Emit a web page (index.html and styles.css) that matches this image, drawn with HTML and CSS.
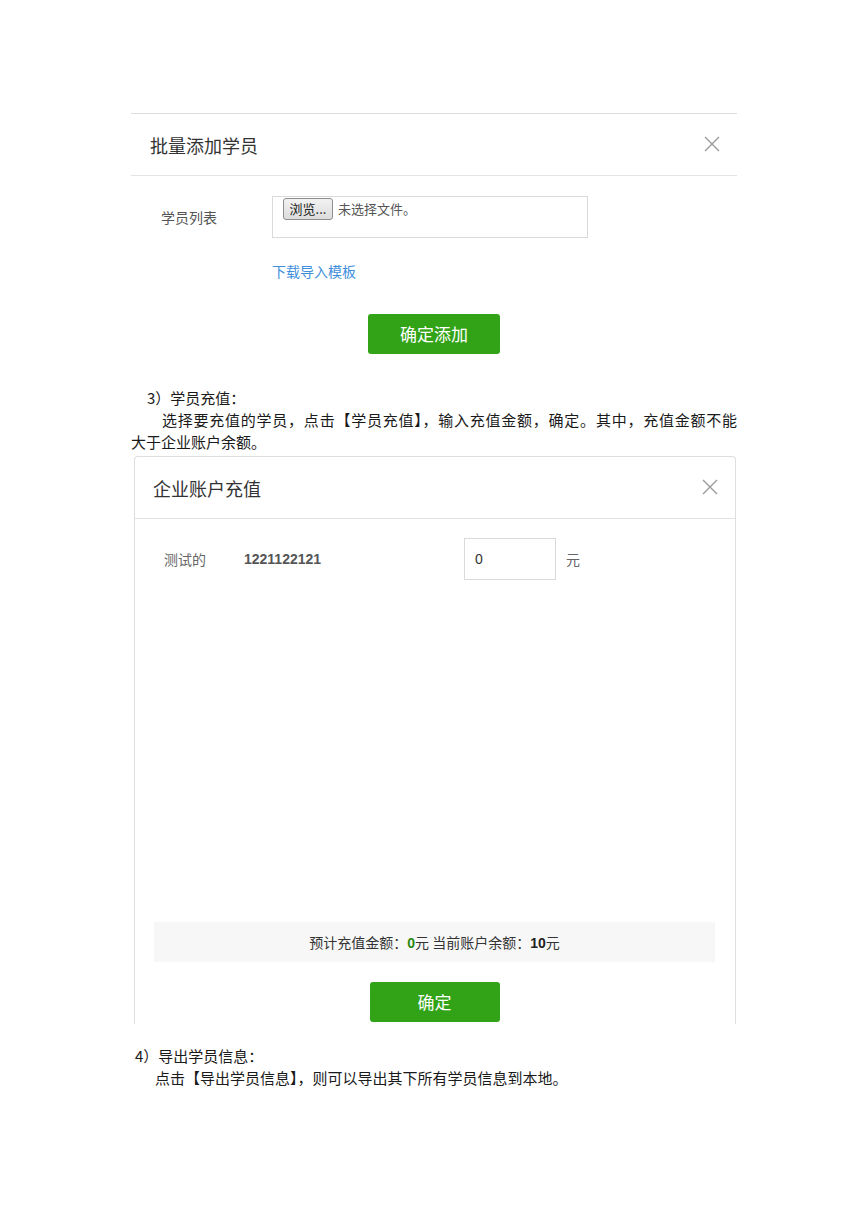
FILE: index.html
```html
<!DOCTYPE html>
<html lang="zh-CN">
<head>
<meta charset="utf-8">
<title>学员管理</title>
<link rel="stylesheet" href="styles.css">
</head>
<body>
<div class="page">
  <section class="shot1">
    <div class="dlg-head">
      <span class="dlg-title">批量添加学员</span>
      <svg class="close" width="16" height="16" viewBox="0 0 16 16"><path d="M1 1L15 15M15 1L1 15" stroke="#9a9a9a" stroke-width="1.4" fill="none"/></svg>
    </div>
    <div class="dlg-body1">
      <div class="form-row">
        <span class="form-label">学员列表</span>
        <div class="file-box">
          <span class="browse">浏览...</span>
          <span class="nofile">未选择文件。</span>
        </div>
      </div>
      <a class="tpl-link">下载导入模板</a>
      <div class="btn-wrap"><span class="btn-green wide">确定添加</span></div>
    </div>
  </section>

  <p class="step step3">3）学员充值：</p>
  <p class="para-first">选择要充值的学员，点击【学员充值】，输入充值金额，确定。其中，充值金额不能</p>
  <p class="para-cont">大于企业账户余额。</p>

  <section class="shot2">
    <div class="dlg2">
      <div class="dlg-head dlg2-head">
        <span class="dlg-title">企业账户充值</span>
        <svg class="close" width="16" height="16" viewBox="0 0 16 16"><path d="M1 1L15 15M15 1L1 15" stroke="#9a9a9a" stroke-width="1.4" fill="none"/></svg>
      </div>
      <div class="dlg2-body">
        <div class="charge-row">
          <span class="c-name">测试的</span>
          <span class="c-num">1221122121</span>
          <span class="c-input">0</span>
          <span class="c-unit">元</span>
        </div>
        <div class="spacer"></div>
        <div class="summary">预计充值金额：<b class="g">0</b>元 当前账户余额：<b>10</b>元</div>
        <div class="btn-wrap2"><span class="btn-green">确定</span></div>
      </div>
    </div>
  </section>

  <p class="step step4">4）导出学员信息：</p>
  <p class="para-4">点击【导出学员信息】，则可以导出其下所有学员信息到本地。</p>
</div>
</body>
</html>
```

FILE: styles.css
```css
html, body {
  margin: 0;
  padding: 0;
  background: #fff;
}
body {
  font-family: "Noto Sans CJK SC", "Microsoft YaHei", "Liberation Sans", sans-serif;
  color: #222;
}
.page {
  width: 868px;
  padding-top: 113px;
  padding-left: 131px;
  box-sizing: border-box;
}
p { margin: 0; }

/* ---------- shot 1 ---------- */
.shot1 {
  width: 606px;
  border-top: 1px solid #dcdcdc;
}
.dlg-head {
  height: 61px;
  border-bottom: 1px solid #e3e3e3;
  display: flex;
  align-items: center;
  justify-content: space-between;
  padding: 0 17px 0 19px;
}
.dlg-title {
  font-size: 18px;
  color: #333;
  line-height: 24px;
}
.close { display: block; margin-top: -2px; }

.dlg-body1 {
  padding-top: 20px;
  display: flex;
  flex-direction: column;
}
.form-row {
  display: flex;
  align-items: center;
  height: 42px;
}
.form-label {
  width: 111px;
  padding-left: 30px;
  font-size: 14px;
  color: #555;
}
.file-box {
  width: 316px;
  height: 42px;
  box-sizing: border-box;
  border: 1px solid #d9d9d9;
  padding: 1px 0 0 10px;
  display: flex;
  align-items: flex-start;
  gap: 5px;
}
.browse {
  height: 22px;
  width: 50px;
  box-sizing: border-box;
  border: 1px solid #8d8d8d;
  border-radius: 3px;
  background: linear-gradient(#f2f2f2, #dcdcdc);
  font-size: 13px;
  line-height: 20px;
  text-align: center;
  color: #222;
}
.nofile {
  font-size: 13px;
  line-height: 22px;
  color: #555;
}
.tpl-link {
  margin: 23px 0 0 141px;
  font-size: 14px;
  line-height: 20px;
  color: #3f8fdc;
}
.btn-wrap {
  margin-top: 33px;
  display: flex;
  justify-content: center;
}
.btn-green {
  width: 130px;
  height: 40px;
  background: #32a317;
  border-radius: 3px;
  color: #fff;
  font-size: 17px;
  line-height: 40px;
  text-align: center;
  display: block;
}
.btn-green.wide { width: 132px; }

/* ---------- text ---------- */
.step, .para-first, .para-cont, .para-4 {
  font-size: 15px;
  line-height: 22px;
  color: #1a1a1a;
}
.step3 { margin-top: 33px; padding-left: 16px; }
.para-first {
  width: 575px;
  padding-left: 31px;
  text-align: justify;
  text-align-last: justify;
  white-space: nowrap;
}

/* ---------- shot 2 ---------- */
.shot2 {
  margin-top: 3px;
  padding-left: 3px;
}
.dlg2 {
  width: 602px;
  height: 568px;
  box-sizing: border-box;
  border: 1px solid #dedede;
  border-bottom: none;
  border-radius: 4px 4px 0 0;
  display: flex;
  flex-direction: column;
}
.dlg2-head {
  height: 61px;
  flex: none;
  padding: 0 17px 0 18px;
}
.dlg2-body {
  flex: 1;
  display: flex;
  flex-direction: column;
  padding: 19px 20px 2px 19px;
}
.charge-row {
  display: flex;
  align-items: center;
  height: 42px;
  padding-left: 10px;
}
.c-name {
  width: 80px;
  font-size: 14px;
  color: #666;
}
.c-num {
  width: 220px;
  font-size: 14px;
  font-weight: bold;
  color: #555;
  font-family: "Liberation Sans", sans-serif;
}
.c-input {
  width: 92px;
  height: 42px;
  box-sizing: border-box;
  border: 1px solid #d9d9d9;
  padding-left: 10px;
  font-size: 14px;
  line-height: 40px;
  color: #333;
  font-family: "Liberation Sans", sans-serif;
}
.c-unit {
  margin-left: 10px;
  font-size: 14px;
  color: #666;
}
.spacer { flex: 1; }
.summary {
  height: 40px;
  background: #f7f7f7;
  text-align: center;
  font-size: 14px;
  line-height: 40px;
  color: #333;
}
.summary b {
  font-family: "Liberation Sans", sans-serif;
  color: #222;
}
.summary b.g { color: #2a8a10; }
.btn-wrap2 {
  margin-top: 20px;
  display: flex;
  justify-content: center;
}

.step4 { margin-top: 21px; padding-left: 4px; }
.para-4 { padding-left: 24px; }
```
